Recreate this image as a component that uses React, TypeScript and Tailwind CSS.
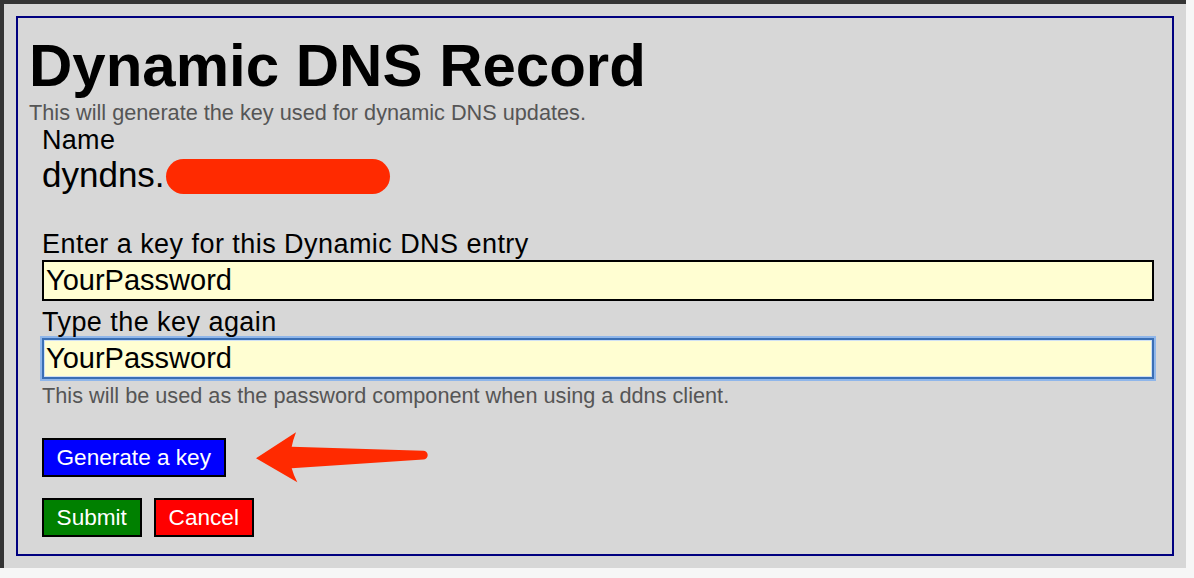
export default function App() {
  return (
    <div className="relative h-[578px] w-[1194px] overflow-hidden bg-[#f6f6f6] font-['Liberation_Sans',Arial,sans-serif]">
      {/* page behind the dialog */}
      <div className="h-[568px] w-[1186px] bg-[#343434] pl-[4px] pt-[4px]">
        <div className="h-full bg-[#d7d7d7] pb-[12.5px] pl-[12px] pr-[12px] pt-[12px]">
          <div className="h-full border-2 border-[#000080] pl-[11px] pt-[18px]">
            <h1 className="text-[60px] font-bold leading-[60px] text-black">
              Dynamic DNS Record
            </h1>
            <p className="mt-[5px] text-[21.7px] leading-[24px] text-[#555]">
              This will generate the key used for dynamic DNS updates.
            </p>

            <div className="ml-[13px] w-[1112px]">
              <div className="text-[27px] leading-[30px] tracking-[0.3px] text-black">Name</div>
              <div className="flex items-start text-[35px] leading-[40px] text-black">
                <span>dyndns.</span>
                <span className="ml-[1px] mt-[4px] h-[35px] w-[224px] rounded-full bg-[#ff2a00]" />
              </div>

              <label className="mt-[34px] block text-[27px] leading-[30px] tracking-[0.45px] text-black">
                Enter a key for this Dynamic DNS entry
              </label>
              <input
                type="text"
                defaultValue="YourPassword"
                className="mt-[1px] block h-[41px] w-full border-2 border-black bg-[#fffed2] pl-[2px] text-[29px] leading-[37px] text-black outline-none"
              />

              <label className="mt-[6px] block text-[27px] leading-[30px] tracking-[0.45px] text-black">
                Type the key again
              </label>
              <input
                type="text"
                defaultValue="YourPassword"
                className="mt-[1px] block h-[41px] w-full border-2 border-[#3a6fb5] bg-[#fffed2] pl-[2px] text-[29px] leading-[37px] text-black shadow-[0_0_0_2px_#8fb6ea,inset_0_0_0_1px_#cfe0f4] outline-none"
              />
              <p className="mt-[5px] text-[21.7px] leading-[24px] text-[#555]">
                This will be used as the password component when using a ddns client.
              </p>

              <button className="mt-[30px] block h-[39px] w-[183.5px] border-2 border-black bg-[#0000ff] text-[22.6px] leading-[35px] text-white">
                Generate a key
              </button>

              <div className="mt-[21px] flex gap-[12.5px]">
                <button className="h-[39px] w-[99.5px] border-2 border-black bg-[#008000] text-[22.6px] leading-[35px] text-white">
                  Submit
                </button>
                <button className="h-[39px] w-[99.5px] border-2 border-black bg-[#ff0000] text-[22.6px] leading-[35px] text-white">
                  Cancel
                </button>
              </div>
            </div>
          </div>
        </div>
      </div>

      {/* annotation arrow drawn over the dialog */}
      <svg
        className="pointer-events-none absolute left-0 top-0"
        width="1194"
        height="578"
        viewBox="0 0 1194 578"
      >
        <path
          d="M256 458.3 L296 432.3 Q293 440 291.7 446.7 L423.3 450.7 A4.4 4.4 0 0 1 423.3 459.5 L291.7 468.3 Q293.5 475 297.3 482.3 Z"
          fill="#ff2a00"
        />
      </svg>
    </div>
  );
}
